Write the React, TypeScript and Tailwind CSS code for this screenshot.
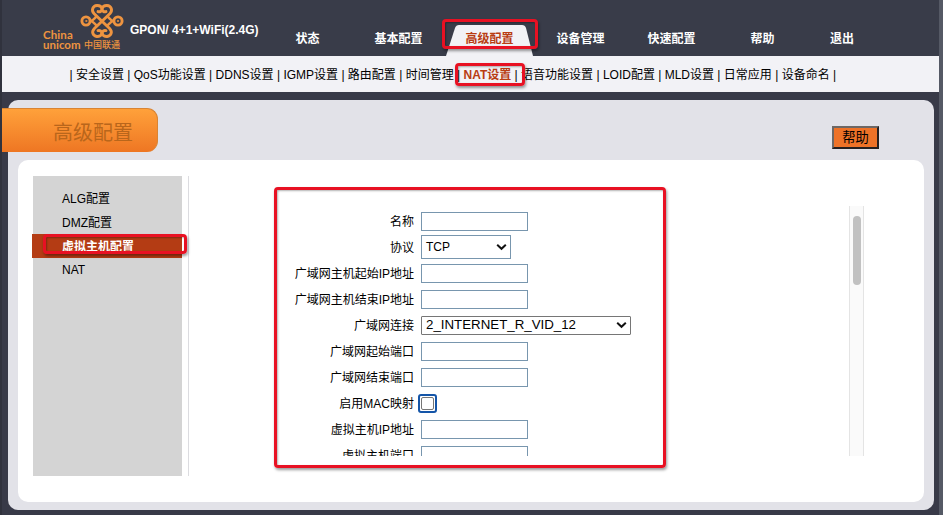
import type { ReactNode } from "react";

const fontStack = "font-['Liberation_Sans','Noto_Sans_CJK_SC',sans-serif]";

const mainNav = ["状态", "基本配置", "高级配置", "设备管理", "快速配置", "帮助", "退出"];
const subNav = [
  "安全设置", "QoS功能设置", "DDNS设置", "IGMP设置", "路由配置", "时间管理",
  "NAT设置", "语音功能设置", "LOID配置", "MLD设置", "日常应用", "设备命名",
];
const sideNav = ["ALG配置", "DMZ配置", "虚拟主机配置", "NAT"];

function Knot() {
  return (
    <svg className="absolute left-[37px] top-0" width="44" height="36" viewBox="0 0 44 36" fill="none" stroke="#ee9440" strokeWidth="2.9" strokeLinecap="round">
      <path d="M18 8.6C20 9.2 22.2 8 22 5.4C21.2 3.2 19 2.4 17 2.5C12.4 2.8 11.2 7.6 14 10.6L29.6 25.4C33 29 31 33 27.2 33.5C24.6 33.7 22.4 32.2 22 30.4C21.8 28.2 20 27 18 27.6" />
      <path d="M26 8.6C24 9.2 21.8 8 22 5.4C22.8 3.2 25 2.4 27 2.5C31.6 2.8 32.8 7.6 30 10.6L14.4 25.4C11 29 13 33 16.8 33.5C19.4 33.7 21.6 32.2 22 30.4C22.2 28.2 24 27 26 27.6" />
      <circle cx="6" cy="18" r="4.1" />
      <circle cx="38" cy="18" r="4.1" />
      <path d="M10.4 18C12.8 18 14.2 15.6 16 14M10.4 18C12.8 18 14.2 20.4 16 22M33.6 18C31.2 18 29.8 15.6 28 14M33.6 18C31.2 18 29.8 20.4 28 22" strokeWidth="2.4" />
      <circle cx="6.2" cy="18" r="0.6" strokeWidth="1" />
      <circle cx="37.8" cy="18" r="0.6" strokeWidth="1" />
    </svg>
  );
}

function Logo() {
  return (
    <div className="relative mt-[3px] h-[50px] w-[88px] text-[#ee9440]">
      <Knot />
      <div className="h-[37px] pt-[26px] font-[Lato,sans-serif] text-[11.5px] font-bold leading-[11px] tracking-[0.1px]">China</div>
      <div className="flex h-[10px] items-center whitespace-nowrap font-[Lato,sans-serif] text-[11.5px] font-bold leading-[10px]">
        <span className="w-[41px]">unicom</span>
        <span className="font-['Noto_Sans_CJK_SC',sans-serif] text-[9px] font-medium">中国联通</span>
      </div>
    </div>
  );
}

function Mark({ className }: { className: string }) {
  return (
    <div className={`pointer-events-none absolute z-10 rounded-[4px] border-[3px] border-[#e81123] shadow-[1px_2px_3px_rgba(0,0,0,0.4),inset_1px_1px_2px_rgba(0,0,0,0.3)] ${className}`} />
  );
}

function Row({ label, children }: { label: string; children: ReactNode }) {
  return (
    <div className="flex h-[26px] shrink-0 items-center">
      <div className="w-[145px] whitespace-nowrap text-right text-[12px]">{label}</div>
      <div className="mb-[2px] ml-[7px] flex items-center">{children}</div>
    </div>
  );
}

function Field() {
  return <input className="block h-[19px] w-[107px] appearance-none border border-solid border-[#7896ae] bg-white" />;
}

function Select({ value, className }: { value: string; className: string }) {
  return (
    <div className={`flex items-center justify-between border bg-white pl-[4px] ${className}`}>
      <span className="whitespace-nowrap">{value}</span>
      <svg className="mr-[3px]" width="11" height="8" viewBox="0 0 11 8" fill="none" stroke="#111" strokeWidth="2">
        <path d="M1.2 1.8L5.5 5.8L9.8 1.8" />
      </svg>
    </div>
  );
}

export default function App() {
  return (
    <div className={`relative flex h-[515px] w-[943px] flex-col overflow-hidden border-l-2 border-r-4 border-l-[#30323d] border-r-[#555965] bg-[#383a48] text-black ${fontStack}`}>
      <header className="flex h-[56px] shrink-0 bg-[#393c49] pl-[41px] text-[12px] font-bold text-white">
        <Logo />
        <div className="-ml-px h-full w-[132px] whitespace-nowrap pt-[21px] leading-[18px]">GPON/ 4+1+WiFi(2.4G)</div>
        <nav className="flex">
          {mainNav.map((item, i) => (
            <div key={item} className={`relative h-[56px] pt-[30px] text-center leading-[18px] ${i === 6 ? "w-[68px]" : "w-[91px]"} ${i === 2 ? "text-[#b93c12]" : ""}`}>
              {i === 2 && (
                <svg className="absolute left-[2px] top-[25px]" width="87" height="31" viewBox="0 0 87 31">
                  <path d="M0 31L9 3Q10 0 13 0H76Q79 0 80 3L87 31Z" fill="#f2f2f6" />
                </svg>
              )}
              <span className="relative">{item}</span>
            </div>
          ))}
        </nav>
      </header>

      <nav className="flex h-[36px] shrink-0 items-center whitespace-pre bg-[#f2f2f6] pl-[67.5px] pt-[2px] text-[12px]">
        <span>{"| "}</span>
        {subNav.map((item) => (
          <span key={item}>
            <span className={item === "NAT设置" ? "font-bold text-[#b93c12]" : ""}>{item}</span>
            {" | "}
          </span>
        ))}
      </nav>

      <main className="ml-[6px] mt-[8px] h-[410px] w-[926px] shrink-0 rounded-[10px] bg-[#e2e2e8] pt-[8px]">
        <div className="flex h-[52px] items-start justify-between">
          <h1 className="-ml-[6px] h-[44px] w-[156px] rounded-r-[11px] border-r border-t border-[#d98433] bg-linear-to-b from-[#ffa13a] to-[#ee7623] pl-[51px] text-[20px] leading-[48px] text-[#b9661b]">高级配置</h1>
          <button className="mr-[55px] mt-[18px] h-[23px] w-[47px] border-2 border-b-[#262020] border-l-[#6d6866] border-r-[#262020] border-t-[#6d6866] bg-[#ee7227] text-[13.3px] leading-[19px]">帮助</button>
        </div>

        <section className="ml-[10px] flex h-[342px] w-[906px] rounded-[10px] bg-white pl-[15px] pt-[16px]">
          <aside className="h-[300px] w-[149px] bg-[#d4d4d4] pt-[10px]">
            {sideNav.map((item, i) => (
              <div key={item} className={`-ml-px h-[24px] pl-[30px] text-[12px] ${i === 3 ? "leading-[24px]" : "leading-[26px]"} ${i === 2 ? "bg-[#b43c14] font-bold text-white" : ""}`}>{item}</div>
            ))}
          </aside>
          <div className="ml-[6px] h-[300px] w-px bg-[#dcdce0]" />
          <div className="ml-[80px] mt-[30px] flex h-[250px] w-[580px] flex-col overflow-hidden pt-[3px]">
            <Row label="名称"><Field /></Row>
            <Row label="协议"><Select value="TCP" className="h-[24px] w-[90px] border-[#7896ae] text-[12px]" /></Row>
            <Row label="广域网主机起始IP地址"><Field /></Row>
            <Row label="广域网主机结束IP地址"><Field /></Row>
            <Row label="广域网连接"><Select value="2_INTERNET_R_VID_12" className="h-[19px] w-[210px] rounded-[1px] border-[#767676] text-[13.3px] leading-[18px]" /></Row>
            <Row label="广域网起始端口"><Field /></Row>
            <Row label="广域网结束端口"><Field /></Row>
            <Row label="启用MAC映射">
              <div className="-ml-[3px] flex h-[19px] w-[19px] items-center justify-center rounded-[3px] border-2 border-[#1455a8]">
                <div className="h-[13px] w-[13px] rounded-[2px] border border-[#767676]" />
              </div>
            </Row>
            <Row label="虚拟主机IP地址"><Field /></Row>
            <Row label="虚拟主机端口"><Field /></Row>
          </div>
          <div className="mt-[30px] h-[250px] w-[15px] border-x border-[#e4e4e4] bg-[#fafafa] pl-[3px] pt-[10px]">
            <div className="h-[69px] w-[8px] rounded-full bg-[#c1c1c1]" />
          </div>
        </section>
      </main>

      <Mark className="left-[440px] top-[19px] h-[30px] w-[96px]" />
      <Mark className="left-[453px] top-[63px] h-[23px] w-[70px]" />
      <Mark className="left-[41px] top-[234px] h-[20px] w-[144px]" />
      <Mark className="left-[272px] top-[187px] h-[281px] w-[392px]" />
    </div>
  );
}
